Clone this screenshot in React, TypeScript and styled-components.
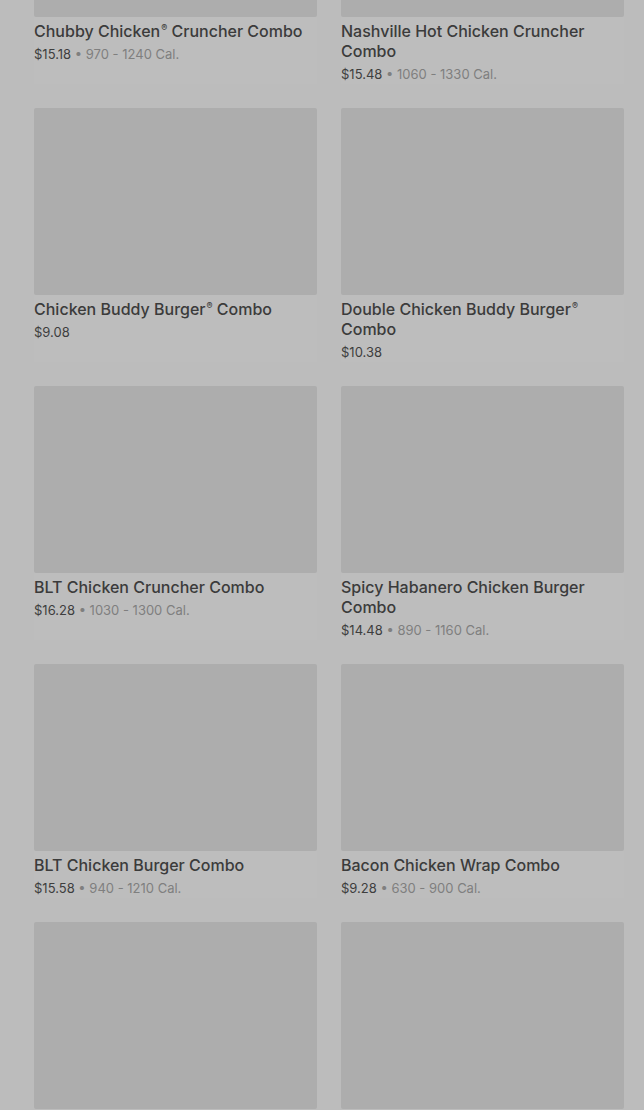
import React from "react";
import styled, { createGlobalStyle } from "styled-components";

const Global = createGlobalStyle`
  html, body { margin: 0; padding: 0; background: #bcbcbc; overflow: hidden; }
  body { font-family: Inter, Roboto, "Liberation Sans", sans-serif; }
`;

const Page = styled.div`
  width: 644px;
  height: 1110px;
  overflow: hidden;
  background: #bcbcbc;
`;

const Grid = styled.div`
  display: grid;
  grid-template-columns: 283px 283px;
  column-gap: 24px;
  row-gap: 24px;
  padding: 0 20px 0 34px;
  margin-top: -170px;
`;

const Card = styled.div`
  display: flex;
  flex-direction: column;
  background: #bdbdbd;
`;

const Img = styled.div`
  height: 187px;
  background: #adadad;
  border-radius: 2px;
`;

const Title = styled.div`
  margin-top: 4px;
  font-size: 16px;
  line-height: 20px;
  font-weight: 500;
  color: #3b3b3b;
`;

const Reg = styled.span`
  font-size: 9px;
  line-height: 0;
  position: relative;
  top: -6px;
  margin-left: 1px;
`;

const Meta = styled.div`
  margin-top: 3px;
  font-size: 13px;
  line-height: 20px;
  color: #3e3e3e;
`;

const Cal = styled.span`
  color: #7f7f7f;
`;

const items: { name: string; reg?: boolean; rest?: string; price: string; cal?: string }[] = [
  { name: "Chubby Chicken", reg: true, rest: " Cruncher Combo", price: "$15.18", cal: "970 - 1240 Cal." },
  { name: "Nashville Hot Chicken Cruncher Combo", price: "$15.48", cal: "1060 - 1330 Cal." },
  { name: "Chicken Buddy Burger", reg: true, rest: " Combo", price: "$9.08" },
  { name: "Double Chicken Buddy Burger", reg: true, rest: " Combo", price: "$10.38" },
  { name: "BLT Chicken Cruncher Combo", price: "$16.28", cal: "1030 - 1300 Cal." },
  { name: "Spicy Habanero Chicken Burger Combo", price: "$14.48", cal: "890 - 1160 Cal." },
  { name: "BLT Chicken Burger Combo", price: "$15.58", cal: "940 - 1210 Cal." },
  { name: "Bacon Chicken Wrap Combo", price: "$9.28", cal: "630 - 900 Cal." },
  { name: "", price: "" },
  { name: "", price: "" },
];

export default function App() {
  return (
    <Page>
      <Global />
      <Grid>
        {items.map((it, i) => (
          <Card key={i}>
            <Img />
            {it.name && (
              <Title>
                {it.name}
                {it.reg && <Reg>®</Reg>}
                {it.rest}
              </Title>
            )}
            {it.price && (
              <Meta>
                {it.price}
                {it.cal && <Cal> • {it.cal}</Cal>}
              </Meta>
            )}
          </Card>
        ))}
      </Grid>
    </Page>
  );
}
